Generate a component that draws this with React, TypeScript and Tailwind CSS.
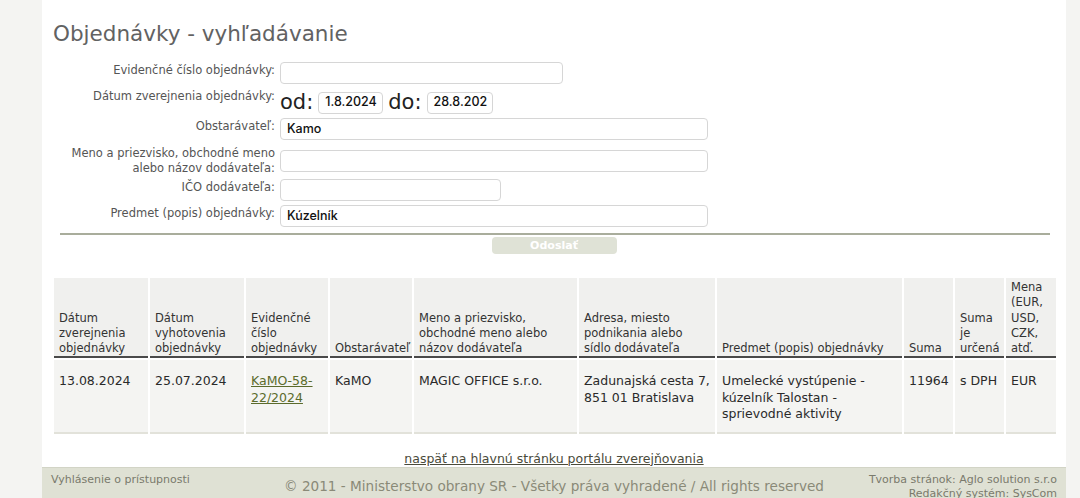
import React from 'react'

const font = { fontFamily: '"DejaVu Sans", Verdana, sans-serif' }

const headers = [
    'Dátum zverejnenia objednávky',
    'Dátum vyhotovenia objednávky',
    'Evidenčné číslo objednávky',
    'Obstarávateľ',
    'Meno a priezvisko, obchodné meno alebo názov dodávateľa',
    'Adresa, miesto podnikania alebo sídlo dodávateľa',
    'Predmet (popis) objednávky',
    'Suma',
    'Suma je určená',
    'Mena (EUR, USD, CZK, atď.',
]

const widths = [94, 94, 82, 82, 163, 136, 185, 49, 49, 50]

function Input({ w, value }: { w: string; value?: string }) {
    return (
        <div
            className={`${w} h-[22px] rounded-[4px] border border-[#d6d6d6] bg-white px-[6px] flex items-center text-[12.5px] font-medium text-[#111]`}
            style={{ fontFamily: 'Inter, "Liberation Sans", sans-serif' }}
        >
            {value}
        </div>
    )
}

function Row({ label, children, h, mt, lt }: { label: React.ReactNode; children: React.ReactNode; h: string; mt: string; lt: string }) {
    return (
        <div className={`flex ${h} ${mt}`}>
            <div className={`w-[238px] shrink-0 text-right pr-[5px] text-[11.5px] leading-[15px] text-[#555] ${lt}`}>{label}</div>
            <div className="flex items-center">{children}</div>
        </div>
    )
}

export default function App() {
    return (
        <div className="flex h-[498px] w-[1080px] overflow-hidden bg-[#f4f4f2]" style={font}>
            <div className="w-[42px] shrink-0" />
            <div className="w-[1024px] shrink-0 bg-white">
                <h1 className="pl-[11px] pt-[20px] text-[21.5px] leading-[28px] text-[#626262]">Objednávky - vyhľadávanie</h1>

                <div className="mt-[14px]">
                    <Row label="Evidenčné číslo objednávky:" h="h-[22px]" mt="" lt="pt-[1px]">
                        <Input w="w-[283px]" />
                    </Row>
                    <Row label="Dátum zverejnenia objednávky:" h="h-[27px]" mt="mt-[5px]" lt="pt-[0px]">
                        <span className="text-[21px] text-[#222] leading-none mr-[5px]">od:</span>
                        <Input w="w-[65px]" value="1.8.2024" />
                        <span className="text-[21px] text-[#222] leading-none ml-[5px] mr-[5px]">do:</span>
                        <Input w="w-[66px]" value="28.8.202" />
                    </Row>
                    <Row label="Obstarávateľ:" h="h-[22px]" mt="mt-[2px]" lt="pt-[1px]">
                        <Input w="w-[428px]" value="Kamo" />
                    </Row>
                    <Row label={<>Meno a priezvisko, obchodné meno<br />alebo názov dodávateľa:</>} h="h-[30px]" mt="mt-[6px]" lt="">
                        <Input w="w-[428px]" />
                    </Row>
                    <Row label="IČO dodávateľa:" h="h-[22px]" mt="mt-[3px]" lt="pt-[1px]">
                        <Input w="w-[221px]" />
                    </Row>
                    <Row label="Predmet (popis) objednávky:" h="h-[22px]" mt="mt-[4px]" lt="pt-[1px]">
                        <Input w="w-[428px]" value="Kúzelník" />
                    </Row>
                </div>

                <div className="mt-[6px] ml-[18px] mr-[16px] h-[2px] bg-[#a9ad9c]" />
                <div className="flex justify-center mt-[2px]">
                    <button className="w-[125px] h-[17px] rounded-[4px] bg-[#dfe2d6] text-white text-[11px] font-bold leading-none">
                        Odoslať
                    </button>
                </div>

                <table className="mt-[22px] ml-[10px] table-fixed border-separate border-spacing-[2px] w-[1006px]">
                    <colgroup>
                        {widths.map((w, i) => (
                            <col key={i} style={{ width: w }} />
                        ))}
                    </colgroup>
                    <thead>
                        <tr>
                            {headers.map((h, i) => (
                                <th
                                    key={i}
                                    className="align-bottom text-left font-normal bg-[#f0f0ee] border-b-2 border-[#4a4a4a] px-[5px] pt-[2px] pb-[0px] text-[11.5px] leading-[15.25px] text-[#333]"
                                >
                                    {h}
                                </th>
                            ))}
                        </tr>
                    </thead>
                    <tbody>
                        <tr className="text-[12.5px] leading-[16.5px] text-[#2a2a2a]">
                            {[
                                '13.08.2024',
                                '25.07.2024',
                                null,
                                'KaMO',
                                'MAGIC OFFICE s.r.o.',
                                'Zadunajská cesta 7, 851 01 Bratislava',
                                'Umelecké vystúpenie - kúzelník Talostan - sprievodné aktivity',
                                '11964',
                                's DPH',
                                'EUR',
                            ].map((v, i) => (
                                <td key={i} className="align-top bg-[#f4f4f2] border-b-2 border-[#e2e2da] px-[5px] pt-[13px] pb-[9px]">
                                    {v === null ? (
                                        <a href="#" className="underline text-[#5b6b2c]">KaMO-58-22/2024</a>
                                    ) : (
                                        v
                                    )}
                                </td>
                            ))}
                        </tr>
                    </tbody>
                </table>

                <div className="mt-[14px] text-center leading-[16px]">
                    <a href="#" className="text-[12.5px] underline text-[#4a4a3a]">
                        naspäť na hlavnú stránku portálu zverejňovania
                    </a>
                </div>

                <footer className="h-[60px] bg-[#dfe1d4] border-t border-[#d2d4c6] flex items-start px-[9px] pt-[5px]">
                    <div className="w-[200px] shrink-0 text-[11px] leading-[14px] text-[#7a7a6c]">Vyhlásenie o prístupnosti</div>
                    <div className="flex-1 whitespace-nowrap text-center text-[13.6px] leading-[17px] text-[#8a8a78] pt-[5px]">
                        © 2011 - Ministerstvo obrany SR - Všetky práva vyhradené / All rights reserved
                    </div>
                    <div className="w-[200px] shrink-0 whitespace-nowrap text-[11px] leading-[14px] text-[#7a7a6c] text-right">
                        Tvorba stránok: Aglo solution s.r.o
                        <br />
                        Redakčný systém: SysCom
                    </div>
                </footer>
            </div>
            <div className="flex-1" />
        </div>
    )
}
